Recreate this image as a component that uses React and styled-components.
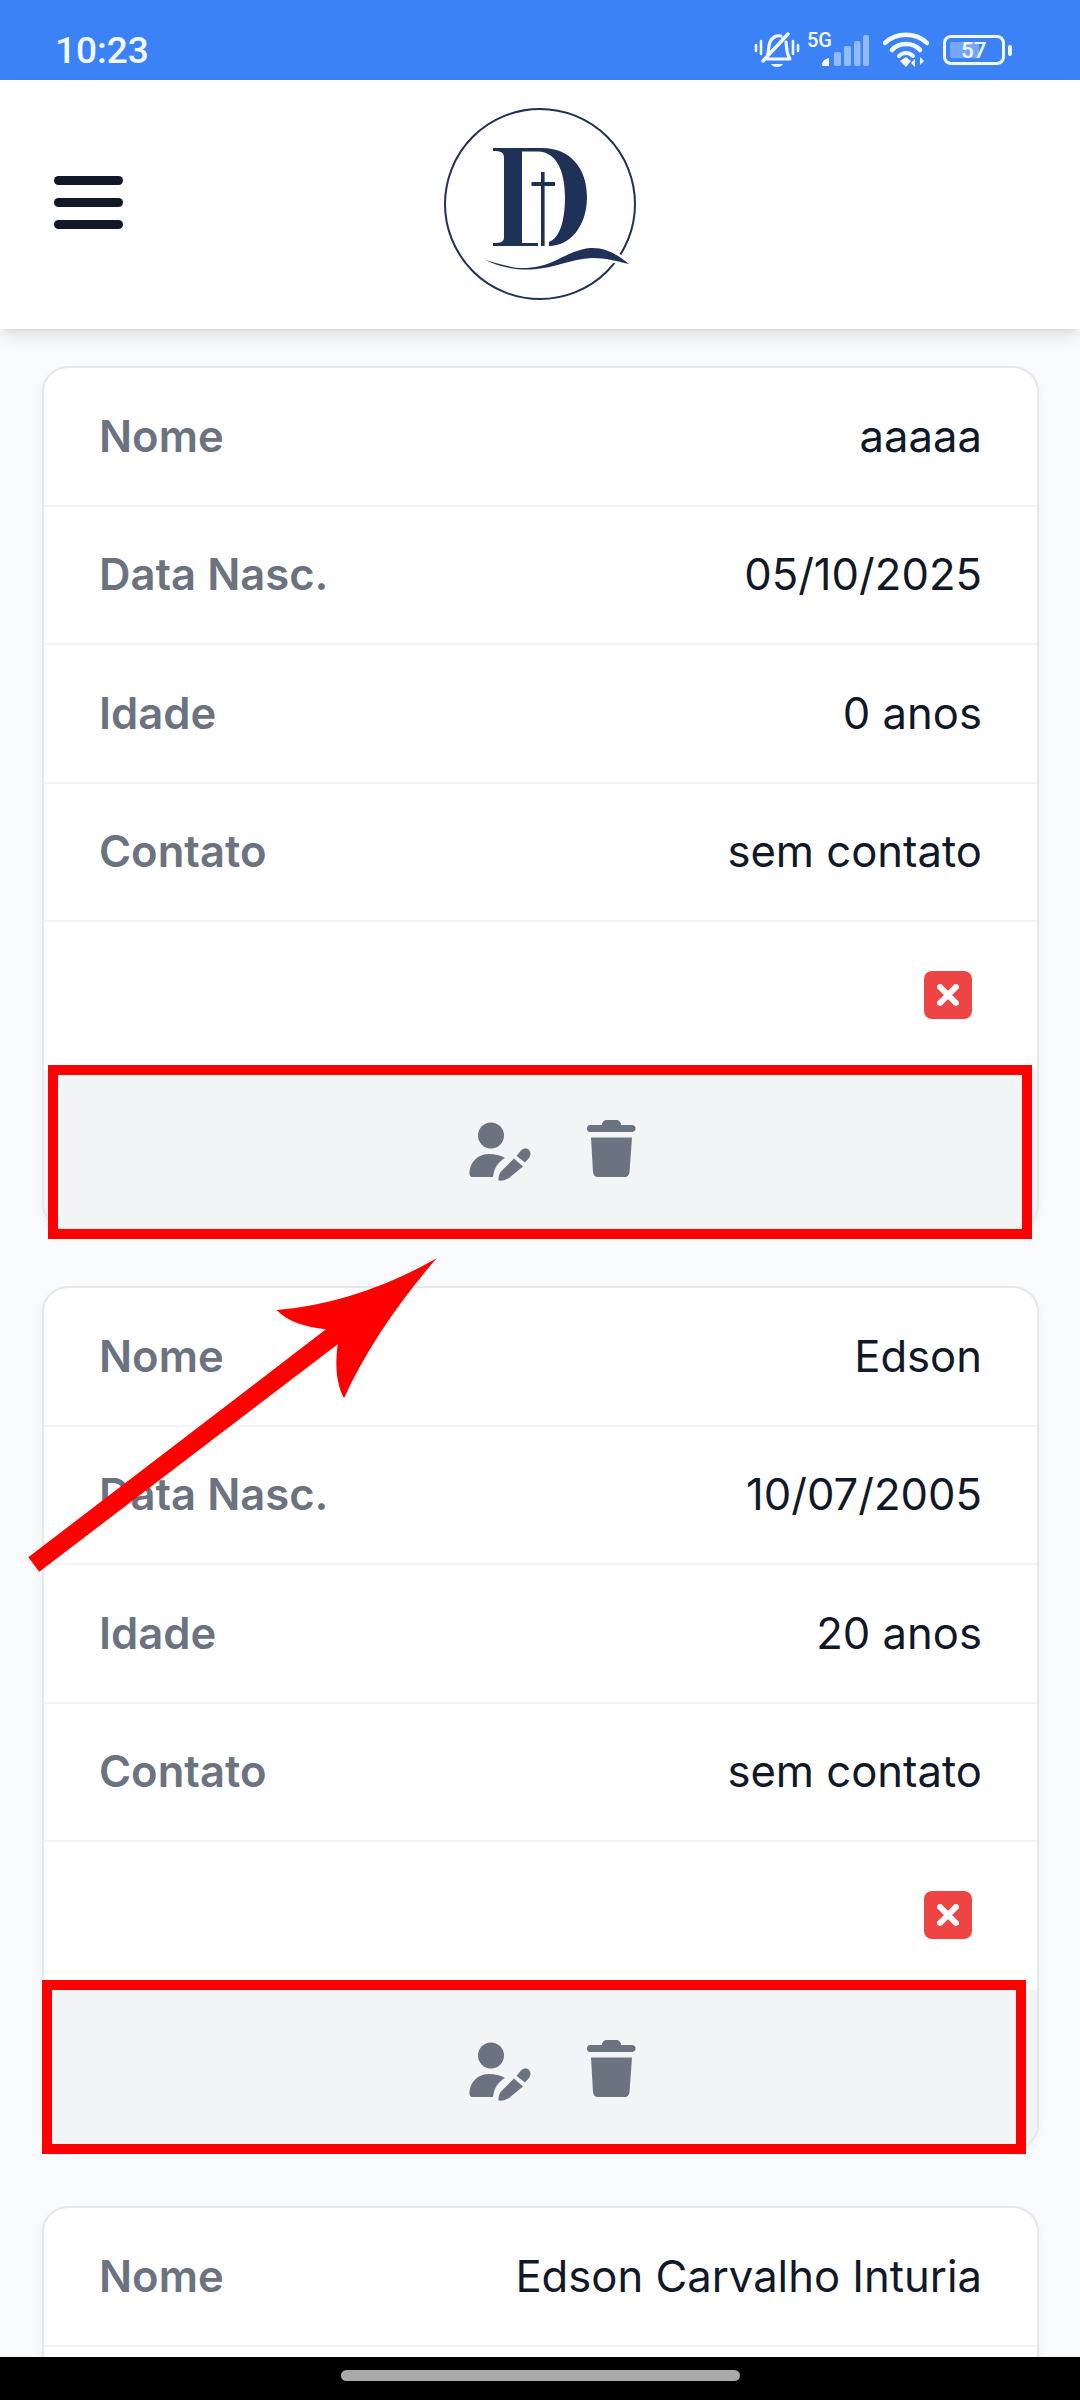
import React from "react"
import styled, { createGlobalStyle } from "styled-components"

const membros = [
    { nome: "aaaaa", nascimento: "05/10/2025", idade: "0 anos", contato: "sem contato", caixa: { top: 697, left: 4, right: 5 } },
    { nome: "Edson", nascimento: "10/07/2005", idade: "20 anos", contato: "sem contato", caixa: { top: 692, left: -2, right: 11 } },
    { nome: "Edson Carvalho Inturia" },
]

export default function App() {
    return (
        <Screen>
            <GlobalStyle />
            <StatusBar>
                <Clock>10:23</Clock>
                <StatusIcons>
                    <BellOffIcon />
                    <Network>
                        <NetworkLabel>5G</NetworkLabel>
                        <SignalIcon />
                    </Network>
                    <WifiIcon />
                    <Battery>
                        <BatteryBody>
                            <BatteryFill />
                            <BatteryText>57</BatteryText>
                        </BatteryBody>
                        <BatteryNub />
                    </Battery>
                </StatusIcons>
            </StatusBar>

            <Header>
                <MenuButton aria-label="menu">
                    <MenuBar />
                    <MenuBar />
                    <MenuBar />
                </MenuButton>
                <Logo />
            </Header>

            <Content>
                {membros.map((m) => (
                    <Card key={m.nome}>
                        <Row>
                            <Label>Nome</Label>
                            <Value>{m.nome}</Value>
                        </Row>
                        {m.nascimento ? (
                            <>
                                <Row>
                                    <Label>Data Nasc.</Label>
                                    <Value>{m.nascimento}</Value>
                                </Row>
                                <Row>
                                    <Label>Idade</Label>
                                    <Value>{m.idade}</Value>
                                </Row>
                                <Row>
                                    <Label>Contato</Label>
                                    <Value>{m.contato}</Value>
                                </Row>
                                <StatusRow>
                                    <CloseBadge>
                                        <svg width="22" height="22" viewBox="0 0 22 22">
                                            <path d="M3 3 L19 19 M19 3 L3 19" stroke="#fff" strokeWidth="6" strokeLinecap="round" />
                                        </svg>
                                    </CloseBadge>
                                </StatusRow>
                                <Actions>
                                    <UserEditIcon />
                                    <TrashIcon />
                                </Actions>
                                <Highlight $top={m.caixa.top} $left={m.caixa.left} $right={m.caixa.right} />
                            </>
                        ) : (
                            <Row />
                        )}
                    </Card>
                ))}
                <Arrow />
            </Content>

            <NavBar>
                <NavPill />
            </NavBar>
        </Screen>
    )
}

function BellOffIcon() {
    return (
        <svg width="46" height="38" viewBox="0 0 46 38" fill="none" stroke="#f3f7ff" strokeLinecap="round" strokeLinejoin="round">
            <path d="M2 14 V20 M7 10 V23 M39 10 V23 M44 14 V20" strokeWidth="2.6" />
            <path d="M13 27 C15 22 14 16 16 11 C18 6 23 4 27 5 M32 11 C33 17 32 22 36 28 H11" strokeWidth="3.2" />
            <path d="M9 30 L34 3" strokeWidth="3.4" />
            <path d="M17 33 H29 C27 37 19 37 17 33 Z" fill="#f3f7ff" stroke="none" />
        </svg>
    )
}

function SignalIcon() {
    return (
        <svg width="47" height="31" viewBox="0 0 47 31" fill="#ffffff">
            <path d="M0 30 C0 26 3 24 7 23 V31 H1 Z" />
            <g opacity="0.45">
                <rect x="12" y="17" width="7" height="14" rx="2" />
                <rect x="22" y="11" width="7" height="20" rx="2" />
                <rect x="32" y="6" width="6.500" height="25" rx="2" />
                <rect x="41" y="0" width="6" height="31" rx="2" />
            </g>
        </svg>
    )
}

function WifiIcon() {
    return (
        <svg width="46" height="36" viewBox="0 0 46 36" fill="none" stroke="#f3f7ff" strokeLinecap="round">
            <path d="M2 11 C13 0 33 0 44 11" strokeWidth="4.500" />
            <path d="M9 18 C16 10 30 10 37 18" strokeWidth="4.500" />
            <path d="M16 24 C20 20 26 20 30 24" strokeWidth="4" />
            <path d="M17 29 L23 25 L28 29 L23 35 Z" fill="#f3f7ff" stroke="none" />
            <path d="M32 27 V35 L28 31 Z M37 25 V33 L41 29 Z" fill="#f3f7ff" stroke="none" />
        </svg>
    )
}

function Logo() {
    return (
        <LogoSvg viewBox="0 0 240 230">
            <circle cx="120" cy="114" r="95" fill="none" stroke="#1f3157" strokeWidth="2" />
            <path d="M65 170 C88 176 98 181 120 176 C138 172 148 161 170 158 C186 157 198 165 209 174 C196 171 186 168 172 168 C150 169 136 178 112 179.500 C92 180 78 176 65 170 Z" fill="#1f3157" stroke="#fff" strokeWidth="5" paintOrder="stroke" />
            <path fillRule="evenodd" fill="#1f3157" d="M73 58 H122 C150 58 167 78 167 107 C167 136 150 156 129 156 V152 C140 148 145 130 145 107 C145 82 137 62 118 61.500 H102 V153 H118 V156 H73 V153 C81 153 84 152 84 147 V68 C84 62 81 61 73 61 Z" />
            <rect x="121" y="82" width="3.600" height="74" fill="#1f3157" />
            <rect x="111.500" y="92" width="23.500" height="4" fill="#1f3157" />
        </LogoSvg>
    )
}

function UserEditIcon() {
    return (
        <svg width="64" height="64" viewBox="36 29 64 64" fill="#6b7280">
            <circle cx="60" cy="45.500" r="13" />
            <path d="M38.500 83 C38.500 72 47 64 58 64 C64 64 69 65 74 68 C67 72 63 78 62 87 H41 C39.500 87 38.500 85.500 38.500 83 Z" />
            <path d="M67.500 90.500 C67.300 87 68 84 70 81.500 L83 68.500 L92 76.500 L78 88 C75 90 71 91 67.500 90.500 Z" />
            <path d="M85.500 66 L90 60.500 C92.500 58 96 58 98 60 C100 62 100 65 98 68 L94 72.500 Z" />
        </svg>
    )
}

function TrashIcon() {
    return (
        <svg width="50" height="64" viewBox="155 29 50 64" fill="#6b7280">
            <path d="M171 35 C171 32 173 30 176 30 H185 C188 30 190 32 190 35 H201 C203 35 204.500 36.500 204.500 38.500 C204.500 40.500 203 42 201 42 H159 C157 42 156 40.500 156 38.500 C156 36.500 157 35 159 35 Z" />
            <path d="M160 47.500 H201 L198.500 82 C198.200 85 196.500 87 193.500 87 H167 C164 87 162.300 85 162 82 Z" />
        </svg>
    )
}

function Arrow() {
    return (
        <ArrowSvg viewBox="0 1240 460 340">
            <path
                fill="#ff0000"
                d="M436.700 1258.300 C390 1285 335 1305 276.700 1310 C288 1322 305 1327 326 1329.300 L28.300 1557.300 L39.300 1571.700 L337.700 1344.300 C335 1365 336 1383 344 1398.300 C366 1350 398 1303 436.700 1258.300 Z"
            />
        </ArrowSvg>
    )
}

const GlobalStyle = createGlobalStyle`
    html, body {
        margin: 0;
        padding: 0;
    }
    body {
        background-color: #f9fafb;
        font-family: Inter, "Liberation Sans", sans-serif;
    }
`
const Screen = styled.div`
    width: 1080px;
    height: 2400px;
    display: flex;
    flex-direction: column;
    overflow: hidden;
    background-color: #f9fafb;
`
const StatusBar = styled.div`
    height: 80px;
    flex-shrink: 0;
    display: flex;
    align-items: center;
    justify-content: space-between;
    padding: 0 68px 0 55px;
    background-color: #3b82f6;
    color: #f3f7ff;
`
const Clock = styled.span`
    font-family: Roboto, sans-serif;
    font-size: 37px;
    font-weight: 500;
    margin-top: 20px;
`
const StatusIcons = styled.div`
    display: flex;
    align-items: center;
    gap: 14px;
    margin-top: 20px;
`
const Network = styled.div`
    position: relative;
    width: 47px;
    height: 31px;
    margin-left: 8px;
`
const NetworkLabel = styled.span`
    position: absolute;
    left: -15px;
    top: -2px;
    font-family: Roboto, sans-serif;
    font-size: 20px;
    line-height: 14px;
    font-weight: 500;
`
const Battery = styled.div`
    display: flex;
    align-items: center;
    gap: 3px;
`
const BatteryBody = styled.div`
    position: relative;
    box-sizing: border-box;
    width: 62px;
    height: 30px;
    padding: 4px;
    border: 3px solid #f3f7ff;
    border-radius: 8px;
    display: flex;
`
const BatteryFill = styled.div`
    width: 29px;
    border-radius: 3px;
    background-color: rgba(255, 255, 255, 0.3);
`
const BatteryText = styled.span`
    position: absolute;
    left: 15px;
    top: 0;
    font-family: Roboto, sans-serif;
    font-size: 22.500px;
    line-height: 24px;
    font-weight: 500;
`
const BatteryNub = styled.div`
    width: 4px;
    height: 11px;
    border-radius: 2px;
    background-color: #f3f7ff;
`
const Header = styled.header`
    position: relative;
    z-index: 2;
    height: 249px;
    flex-shrink: 0;
    display: flex;
    align-items: center;
    background-color: #ffffff;
    box-shadow: 0 10px 16px -3px rgba(0, 0, 0, 0.1), 0 4px 6px -4px rgba(0, 0, 0, 0.1);
`
const MenuButton = styled.button`
    display: flex;
    flex-direction: column;
    gap: 13px;
    width: 69px;
    margin: -4px 0 0 54px;
    padding: 0;
    border: none;
    background: none;
`
const MenuBar = styled.span`
    display: block;
    height: 9px;
    border-radius: 5px;
    background-color: #111827;
`
const LogoSvg = styled.svg`
    width: 240px;
    height: 230px;
    margin: 1px 0 0 297px;
`
const Content = styled.main`
    position: relative;
    flex: 1;
    min-height: 0;
    overflow: hidden;
    display: flex;
    flex-direction: column;
    gap: 56px;
    padding: 37px 41px 0 42px;
`
const Card = styled.section`
    position: relative;
    flex-shrink: 0;
    border: 2px solid #e5e7eb;
    border-radius: 26px;
    background-color: #ffffff;
    box-shadow: 0 3px 8px rgba(0, 0, 0, 0.04);
`
const Row = styled.div`
    box-sizing: border-box;
    height: 138.500px;
    display: flex;
    align-items: center;
    justify-content: space-between;
    padding: 0 55px;
    border-bottom: 2px solid #f3f4f6;
`
const Label = styled.span`
    font-size: 43.600px;
    font-weight: 600;
    color: #6b7280;
`
const Value = styled.span`
    font-size: 43.600px;
    font-weight: 400;
    color: #111827;
`
const StatusRow = styled.div`
    box-sizing: border-box;
    height: 148px;
    display: flex;
    align-items: center;
    justify-content: flex-end;
    padding: 0 65px 3px 0;
`
const CloseBadge = styled.div`
    width: 48px;
    height: 48px;
    border-radius: 8px;
    display: flex;
    align-items: center;
    justify-content: center;
    background-color: #ef4444;
`
const Actions = styled.div`
    box-sizing: border-box;
    height: 158px;
    display: flex;
    align-items: center;
    justify-content: center;
    gap: 55px;
    padding: 3px 0 0 21px;
    border-radius: 0 0 24px 24px;
    background-color: #f3f4f6;
`
const Highlight = styled.div`
    position: absolute;
    box-sizing: border-box;
    top: ${(props) => props.$top}px;
    left: ${(props) => props.$left}px;
    right: ${(props) => props.$right}px;
    height: 174px;
    border: 10px solid #ff0000;
`
const ArrowSvg = styled.svg`
    position: absolute;
    left: 0;
    top: 911px;
    width: 460px;
    height: 340px;
    z-index: 3;
`
const NavBar = styled.div`
    height: 43px;
    flex-shrink: 0;
    display: flex;
    justify-content: center;
    padding-top: 13px;
    box-sizing: border-box;
    background-color: #000000;
    position: relative;
    z-index: 4;
`
const NavPill = styled.div`
    width: 399px;
    height: 11px;
    border-radius: 6px;
    background-color: #aaaaaa;
`
